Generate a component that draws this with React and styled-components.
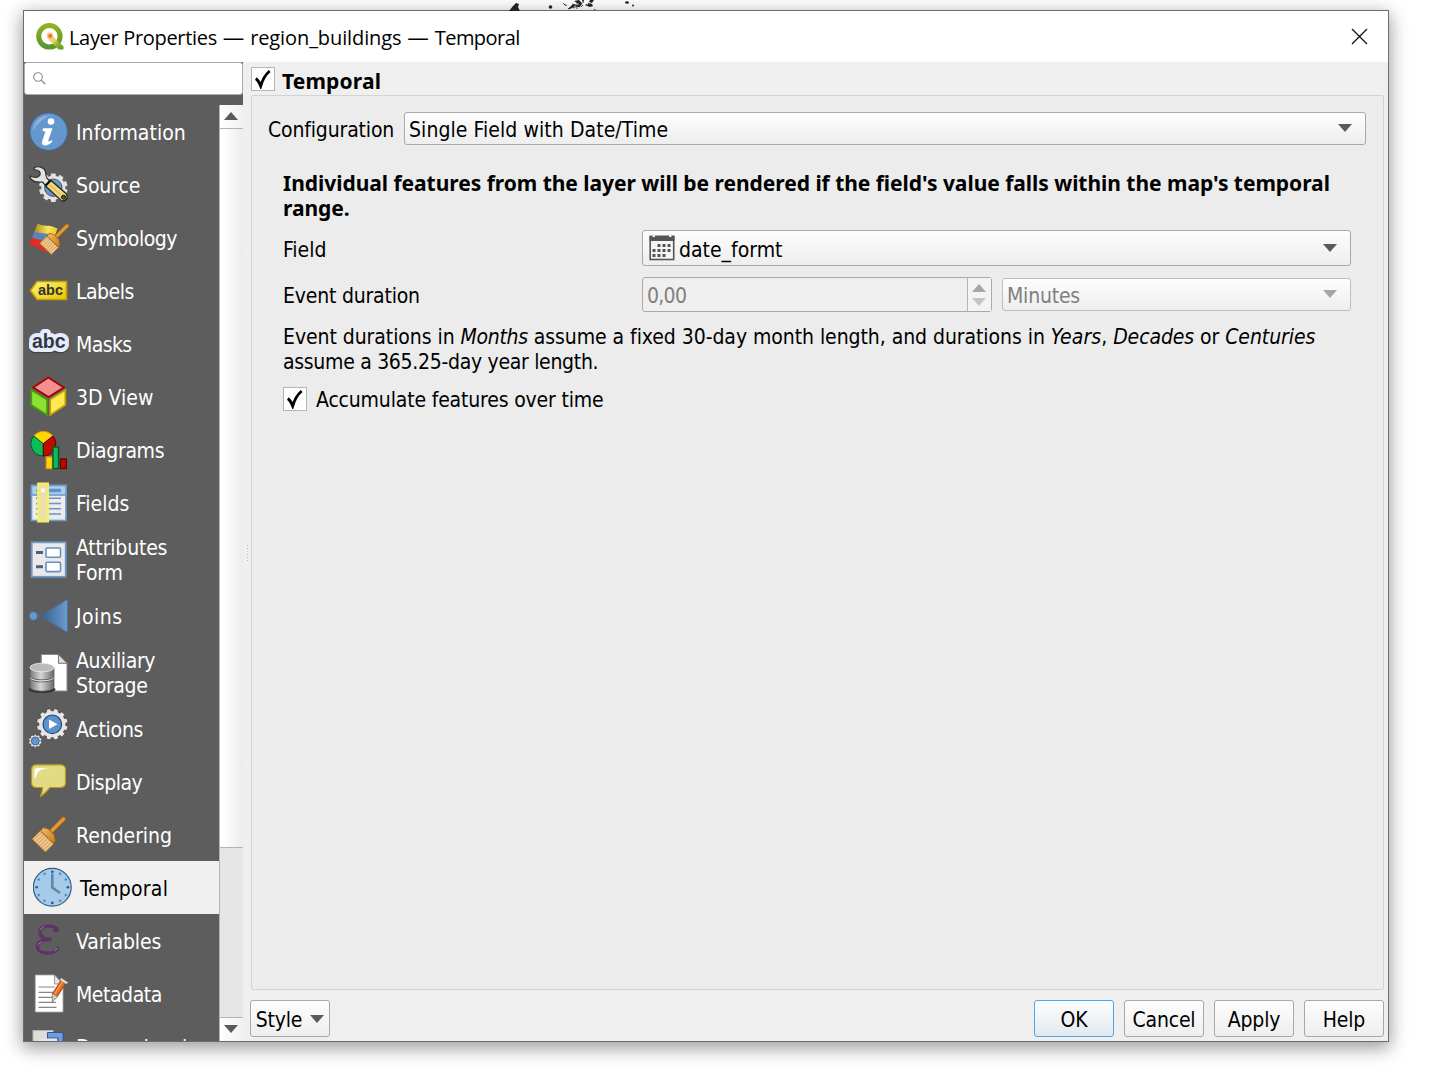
import React from "react";
import styled, { createGlobalStyle } from "styled-components";

const Global = createGlobalStyle`
  * { box-sizing: border-box; }
  body {
    margin: 0;
    background: #fff;
    overflow: hidden;
    color: #000;
    font: 21px/25px "DejaVu Sans Condensed", "DejaVu Sans", sans-serif;
    white-space: nowrap;
  }
  svg { display: block; flex: none; }
  p { margin: 0; }
`;

const Desktop = styled.div`
  position: relative;
  width: 1436px;
  height: 1070px;
  padding: 10px 0 0 23px;
  overflow: hidden;
`;

const MapSpecks = styled.svg`
  position: absolute;
  left: 500px;
  top: 0;
`;

const Window = styled.main`
  display: flex;
  flex-direction: column;
  width: 1366px;
  height: 1032px;
  border: 1px solid #686c6f;
  background: #efefef;
  box-shadow: 0 5px 17px 1px rgba(0, 0, 0, 0.4);
`;

const TitleBar = styled.header`
  display: flex;
  align-items: center;
  height: 51px;
  flex: none;
  padding: 0 20px 0 11px;
  background: #fff;
`;

const WindowTitle = styled.h1`
  flex: 1;
  margin: 2px 0 0 5px;
  font: 400 20px/26px "Open Sans", sans-serif;
`;

const TitlePart = styled.span`
  letter-spacing: ${(p) => p.$track}px;
`;

const Dash = styled.span`
  margin: 0 0.7px;
  font-size: 21.5px;
  line-height: 20px;
`;

const Body = styled.div`
  display: flex;
  flex: 1;
  min-height: 0;
`;

const Sidebar = styled.aside`
  display: flex;
  flex-direction: column;
  width: 219px;
  flex: none;
  background: #5d5d5d;
`;

const SearchBox = styled.div`
  display: flex;
  align-items: center;
  height: 33px;
  margin: 0 0 10px;
  flex: none;
  padding-left: 8px;
  border: 1px solid #ababab;
  border-radius: 3px;
  background: #fff;
`;

const ListArea = styled.div`
  display: flex;
  flex: 1;
  min-height: 0;
`;

const NavList = styled.nav`
  flex: 1;
  overflow: hidden;
`;

const NavRow = styled.div`
  display: flex;
  align-items: center;
  gap: 7px;
  height: ${(p) => (p.$tall ? 60 : 53)}px;
  padding-left: ${(p) => (p.$active ? 9 : 5)}px;
  background: ${(p) => (p.$active ? "#f0f0f0" : "transparent")};
  color: ${(p) => (p.$active ? "#000" : "#fff")};
  white-space: pre-line;
`;

const NavLabel = styled.span`
  padding-top: 3px;
  letter-spacing: ${(p) => p.$track}px;
`;

const ScrollBar = styled.div`
  display: flex;
  flex-direction: column;
  width: 24px;
  border-left: 1px solid #b4b4b4;
  background: #e6e6e6;
`;

const ScrollButton = styled.div`
  display: flex;
  align-items: center;
  justify-content: center;
  height: 23px;
  flex: none;
  padding: 0 2px 2px 0;
  background: linear-gradient(90deg, #fff, #f0f0f0);
`;

const ScrollHandle = styled.div`
  height: 720px;
  margin-bottom: 169px;
  border: solid #b4b4b4;
  border-width: 1px 0;
  background: linear-gradient(90deg, #fff 15%, #ececec);
`;

const ScrollEdge = styled.div`
  height: 1px;
  background: #b4b4b4;
`;

const Splitter = styled.div`
  display: flex;
  flex: none;
  flex-direction: column;
  justify-content: center;
  gap: 2px;
  width: 8px;
  padding: 2px 0 0 4px;
`;

const SplitterDot = styled.i`
  width: 1px;
  height: 1px;
  background: #b8b8b8;
`;

const Content = styled.section`
  display: flex;
  flex-direction: column;
  flex: 1;
  min-width: 0;
  padding: 5px 4px 4px 0;
`;

const CheckLine = styled.div`
  display: flex;
  align-items: center;
  gap: ${(p) => p.$gap}px;
`;

const GroupHeader = styled(CheckLine)`
  align-items: flex-start;
  height: 28px;
`;

const CheckBox = styled.span`
  display: grid;
  place-items: center;
  width: 24px;
  height: 24px;
  border: 1px solid #b5b5b5;
  background: #fff;
`;

const GroupTitle = styled.h2`
  margin: 2px 0 0;
  font: 700 21px/25px "Noto Sans", sans-serif;
  letter-spacing: 0.15px;
`;

const GroupFrame = styled.div`
  flex: 1;
  padding: 16px 17px 0 16px;
  border: 1px solid #d3d3d3;
  border-radius: 2px;
  background: #ececec;
`;

const ConfigRow = styled.div`
  display: flex;
  align-items: center;
  gap: 10px;
  height: 33px;
`;

const Label = styled.label`
  padding-top: ${(p) => p.$drop ?? 3}px;
  width: ${(p) => (p.$width ? `${p.$width}px` : "auto")};
  letter-spacing: ${(p) => p.$track || 0}px;
`;

const Combo = styled.div`
  display: flex;
  align-items: center;
  flex: 1;
  height: ${(p) => p.$height}px;
  padding: 0 13px 1px ${(p) => p.$pad}px;
  border: 1px solid ${(p) => (p.$disabled ? "#c0c0c0" : "#a9a9a9")};
  border-radius: 3px;
  background: linear-gradient(#fdfdfd, #eeeeee);
  color: ${(p) => (p.$disabled ? "#808080" : "#000")};
`;

const ComboText = styled.span`
  flex: 1;
  padding: ${(p) => p.$drop ?? 4}px 0 0 ${(p) => p.$indent || 0}px;
  letter-spacing: ${(p) => p.$track || 0}px;
`;

const Form = styled.div`
  padding: 26px 15px 0 15px;
`;

const Summary = styled.p`
  font: 700 21px/25px "Noto Sans", sans-serif;
  letter-spacing: -0.035px;
  white-space: normal;
`;

const FieldRow = styled.div`
  display: grid;
  grid-template-columns: 349px 1fr;
  align-items: center;
  column-gap: 10px;
  height: ${(p) => p.$height}px;
  margin-top: ${(p) => p.$top}px;
`;

const DurationInputs = styled.div`
  display: grid;
  grid-template-columns: 350px 1fr;
  align-items: center;
  gap: 10px;
`;

const SpinBox = styled.div`
  display: flex;
  height: 35px;
  border: 1px solid #a9a9a9;
  border-radius: 3px;
  background: #efefef;
  color: #808080;
`;

const SpinValue = styled.span`
  flex: 1;
  padding: 6px 0 0 4px;
  letter-spacing: -0.7px;
`;

const SpinButtons = styled.span`
  display: flex;
  flex-direction: column;
  align-items: center;
  justify-content: center;
  gap: 6px;
  width: 24px;
  padding-right: 1px;
  border-left: 1px solid #b4b4b4;
  background: #f3f3f3;
`;

const Note = styled.p`
  margin: 13px 0 10px;
  letter-spacing: -0.06px;
`;

const Term = styled.em`
  letter-spacing: ${(p) => p.$track}px;
`;

const NoteTail = styled.span`
  letter-spacing: -0.3px;
`;

const Footer = styled.footer`
  display: flex;
  gap: 10px;
  margin: 10px 0 0 -1px;
`;

const Button = styled.button`
  display: flex;
  align-items: center;
  justify-content: center;
  gap: 8px;
  width: 80px;
  height: 37px;
  margin: 0 ${(p) => (p.$push ? "auto" : 0)} 0 0;
  padding: 0;
  border: 1px solid ${(p) => (p.$primary ? "#4aa5ec" : "#a9a9a9")};
  border-radius: 3px;
  background: ${(p) =>
    p.$primary ? "linear-gradient(#fdfdfe, #e2e9ef)" : "linear-gradient(#fdfdfd, #eeeeee)"};
  color: #000;
  font: inherit;
  letter-spacing: -0.2px;
`;

const ButtonText = styled.span`
  padding-top: 4px;
`;

const Arrow = ({ up, color = "#5a5a5a" }) => (
  <svg width="14" height="8" viewBox="0 0 14 8">
    <path d={up ? "M0 8L7 0L14 8Z" : "M0 0H14L7 8Z"} fill={color} />
  </svg>
);

const Tick = () => (
  <svg width="18" height="20" viewBox="0 0 18 20">
    <path d="M1.800 9.500C4 11 5.500 13.500 6.700 17C8.500 11 11.500 5.500 15.700 2" fill="none" stroke="#000" strokeWidth="2.800" />
  </svg>
);

const gearPath = (cx, cy, r, depth, teeth) => {
  const pts = [];
  for (let i = 0; i < teeth; i++) {
    const a = ((i + 0.5) / teeth) * Math.PI * 2;
    const s = (Math.PI * 2) / teeth;
    [[-0.34, r - depth], [-0.26, r], [0.26, r], [0.34, r - depth]].forEach(([o, d]) => {
      pts.push(`${(cx + d * Math.cos(a + o * s)).toFixed(2)} ${(cy + d * Math.sin(a + o * s)).toFixed(2)}`);
    });
  }
  return `M${pts.join("L")}Z`;
};

const Icon = ({ children }) => (
  <svg width="40" height="41" viewBox="0 0 40 41">{children}</svg>
);

const InformationIcon = () => (
  <Icon>
    <circle cx="19.700" cy="20.700" r="18.700" fill="#6597cf" stroke="#41699f" strokeWidth="1" />
    <path d="M4 20C5 10 11 4.500 21 4.500C15 7 8 12 4 20Z" fill="#8fb3dd" />
    <circle cx="22" cy="10.500" r="3.300" fill="#fff" />
    <path d="M14 17.200H23.500L19.300 29.500C19 31 20.500 30.500 23.500 29L22.500 31.500C18 35.500 12 35.500 13 30.500L16.500 20.500L13.500 20Z" fill="#fff" />
  </Icon>
);

const SourceIcon = () => (
  <Icon>
    <path d={gearPath(24.3, 23.7, 14.4, 2.4, 10)} fill="#e2e2e2" />
    <circle cx="24.300" cy="23.700" r="8.700" fill="#6597cf" stroke="#49525c" />
    <path d="M5 4C9 1.500 15 3 16.500 7.500C17 10 16.500 12 18 14L21 17.500L16.500 21.500L13.500 18C10 18.500 5 18.500 1.500 14.500L1.200 12C5 14 9.500 14 11 11C12 8 9.500 6 5.500 5.500Z" fill="#e4e4df" stroke="#333" strokeWidth="1.200" />
    <path d="M16.500 22L22 16.500L37 29.500C40 34 36.500 38 32 36.500Z" fill="#ecd77c" stroke="#26231c" strokeWidth="1.300" />
    <path d="M20 20.500L32 31" stroke="#d4bf62" strokeWidth="1.200" />
    <circle cx="34.500" cy="33.200" r="2" fill="#5b5436" stroke="#111" />
    <path d="M16.500 21.500L21.500 16.500" stroke="#111" strokeWidth="2.200" />
  </Icon>
);

const Brush = ({ id }) => (
  <g>
    <defs>
      <linearGradient id={id} x1="0" y1="0" x2="1" y2="1">
        <stop offset="0" stopColor="#f5bd69" />
        <stop offset="1" stopColor="#c27a1c" />
      </linearGradient>
    </defs>
    <path d="M34.500 5L21 18.500" stroke="#9b5c12" strokeWidth="5" strokeLinecap="round" />
    <path d="M34.500 5L20 19.500" stroke="#e0993e" strokeWidth="3.400" strokeLinecap="round" />
    <path d="M11.500 16.500L3 25L16.500 38L25 29.500Z" fill="#efc78c" stroke="#a8712a" />
    <path d="M13 18L4.500 26M15 20L6.500 28M17 22L8.500 30M19 24L10.500 32M21 26L12.500 34M23 28L14.500 36" stroke="#c28e4e" strokeWidth=".8" />
    <path d="M14 13.500C17 14.500 19 14 20.500 16L25 20.500C26 22 25.500 24.500 26.500 26.500L24.500 29.500L11.500 17Z" fill={`url(#${id})`} stroke="#9b5c12" />
  </g>
);

const SymbologyIcon = () => (
  <Icon>
    <defs>
      <linearGradient id="flagShade"><stop offset="0" stopColor="#a58b1c" /><stop offset=".6" stopColor="#f9e75c" /><stop offset="1" stopColor="#e8c81e" /></linearGradient>
    </defs>
    <path d="M8.500 6.500C14 10 20 7 28.500 11.500L24 24L5 16Z" fill="url(#flagShade)" />
    <path d="M5.500 14.500C11 17.500 17 14 24 20L20 30L2 23Z" fill="#5c84b8" />
    <path d="M3 20.500C8 23.500 13 21 20 27L17 36C10 30 6 30.500 0 26.500Z" fill="#e22c23" />
    <g transform="translate(8 4.500) scale(.87)"><Brush id="brushSym" /></g>
  </Icon>
);

const LabelsIcon = () => (
  <Icon>
    <defs>
      <linearGradient id="tagFill" x1="0" y1="0" x2="1" y2="1"><stop offset="0" stopColor="#fff27c" /><stop offset="1" stopColor="#e8c500" /></linearGradient>
    </defs>
    <path d="M1.500 20.500L8 11.500H37.500V29.500H8Z" fill="url(#tagFill)" stroke="#c49f06" strokeWidth="1.600" />
    <text x="9" y="25" fontFamily="Liberation Sans, sans-serif" fontWeight="700" fontSize="14.500" fill="#323232">abc</text>
  </Icon>
);

const MasksIcon = () => (
  <Icon>
    <g fontFamily="Liberation Sans, sans-serif" fontWeight="700" fontSize="19.500" strokeLinejoin="round">
      <text x="3" y="25.700" stroke="#434343" strokeWidth="8.600" fill="none">abc</text>
      <text x="3" y="24.900" stroke="#e6ecfc" strokeWidth="8" fill="none">abc</text>
      <text x="3" y="24.900" fill="#323a40">abc</text>
    </g>
  </Icon>
);

const CubeIcon = () => (
  <Icon>
    <g strokeWidth="1.700">
      <path d="M19.300 1.500L34.800 11.500L19.600 21L4.200 11.500Z" fill="#f58f8f" stroke="#a60000" />
      <path d="M2.300 14L18 23.500V39L2.300 29Z" fill="#8ae234" stroke="#4e9a06" />
      <path d="M36.300 14L21.200 23.500V39L36.300 29Z" fill="#fce94f" stroke="#c4a000" />
    </g>
  </Icon>
);

const DiagramsIcon = () => (
  <Icon>
    <path d="M14.300 14.700L4.700 7A12.300 12.300 0 0 1 23.900 7Z" fill="#ffd800" stroke="#e2920b" />
    <path d="M14.300 14.700L4.700 7A12.300 12.300 0 0 0 14.300 27Z" fill="#0bbd57" stroke="#05572a" />
    <path d="M14.300 14.700L23.900 7A12.300 12.300 0 0 1 14.300 27Z" fill="#bd0b00" stroke="#5e0300" />
    <rect x="17.300" y="28" width="6" height="11.500" fill="#ffd800" stroke="#ef9c10" strokeWidth="1.400" />
    <rect x="31.500" y="30" width="5.800" height="9.500" fill="#bd0b00" stroke="#6a0300" strokeWidth="1.400" />
    <rect x="24" y="18" width="5.500" height="21.500" fill="#0bbd57" stroke="#05572a" strokeWidth="1.400" />
  </Icon>
);

const FieldsIcon = () => (
  <Icon>
    <rect x="2.500" y="3.500" width="34.500" height="35" fill="#ececec" stroke="#6c9aca" strokeWidth="1.600" />
    <rect x="2.500" y="3.500" width="34.500" height="9.500" fill="#abcfee" stroke="#6c9aca" strokeWidth="1.600" />
    <path d="M7 8.500H32M7 16.200H32M7 21.500H32M7 26.800H32M7 32H32" stroke="#6c94c4" strokeWidth="1.600" />
    <path d="M20 8.500H32" stroke="#5f93c8" strokeWidth="3.500" />
    <rect x="9.200" y="1.500" width="9.800" height="38" fill="#ebe0a8" stroke="#f8f258" strokeWidth="2" />
    <rect x="12.300" y="6.700" width="3.500" height="3.500" fill="#fff" />
  </Icon>
);

const FormIcon = () => (
  <Icon>
    <rect x="2.700" y="3.300" width="34" height="34.500" fill="#e9e9e9" stroke="#6c9aca" strokeWidth="1.800" />
    <g fill="#fff" stroke="#6490c2" strokeWidth="1.600">
      <rect x="17" y="9" width="14.500" height="9.300" rx="1" />
      <rect x="17" y="23.300" width="14.500" height="9.300" rx="1" />
    </g>
    <path d="M7 13.400H14M7 27.700H14" stroke="#48637d" strokeWidth="3" />
  </Icon>
);

const JoinsIcon = () => (
  <Icon>
    <defs>
      <linearGradient id="joinFill"><stop offset="0" stopColor="#386088" /><stop offset="1" stopColor="#6a9bd0" /></linearGradient>
    </defs>
    <circle cx="4.300" cy="21" r="4.200" fill="#6597cf" stroke="#426e9f" strokeWidth=".7" />
    <path d="M11.700 21L38.500 4.300V37.500Z" fill="url(#joinFill)" stroke="#426e9f" strokeWidth=".7" />
  </Icon>
);

const StorageIcon = () => (
  <Icon>
    <defs>
      <linearGradient id="discFill"><stop offset="0" stopColor="#777" /><stop offset=".45" stopColor="#d6d6d6" /><stop offset="1" stopColor="#686868" /></linearGradient>
    </defs>
    <path d="M12.300 2.500H29.500L38 11.300V39H12.300Z" fill="#fff" stroke="#8c8c8c" />
    <path d="M29.500 2.500V11.300H38Z" fill="#ddd" stroke="#777" />
    <ellipse cx="13" cy="37.500" rx="13.500" ry="3.500" fill="#333" />
    <path d="M1 15V35C1 40.500 25 40.500 25 35V15Z" fill="url(#discFill)" stroke="#5a5a5a" strokeWidth=".8" />
    <path d="M1 24.500C3 29 23 29 25 24.500M1 26.500C3 31 23 31 25 26.500" fill="none" stroke="#555" strokeWidth=".9" />
    <path d="M1 25.500C3 30 23 30 25 25.500" fill="none" stroke="#eee" strokeWidth=".8" />
    <ellipse cx="13" cy="15.500" rx="12" ry="4.300" fill="#bababa" stroke="#efefef" strokeWidth=".8" />
  </Icon>
);

const ActionsIcon = () => (
  <Icon>
    <path d={gearPath(23.3, 16.3, 15.8, 2.3, 12)} fill="#e6e6e6" stroke="#2d2d2d" strokeWidth=".6" />
    <circle cx="23.300" cy="16.300" r="9.300" fill="#5f92cc" stroke="#2a4a70" strokeWidth="1.200" />
    <path d="M20 11.500L28.500 16.300L20 21.100Z" fill="#fff" />
    <path d={gearPath(6.3, 33, 6.8, 1.2, 10)} fill="#e6e6e6" stroke="#2d2d2d" strokeWidth=".5" />
    <circle cx="6.300" cy="33" r="4" fill="#6597cf" stroke="#2a4a70" strokeWidth=".7" />
  </Icon>
);

const DisplayIcon = () => (
  <Icon>
    <path d="M7.500 3.800H31.500Q36.500 3.800 36.500 8.800V21.500Q36.500 26.500 31.500 26.500H21C18 30 15 33.500 11 35.800C13 32.500 13.500 29.500 13.500 26.500H7.500Q2.500 26.500 2.500 21.500V8.800Q2.500 3.800 7.500 3.800Z" fill="#e4da83" stroke="#b6981c" strokeWidth="1.200" />
    <path d="M5.500 18V10Q5.500 7 9 7H20C13 7.500 8 10 7.500 15Z" fill="#fff" />
  </Icon>
);

const RenderingIcon = () => (
  <Icon><Brush id="brushRender" /></Icon>
);

const ClockIcon = () => (
  <Icon>
    <circle cx="19.300" cy="20.300" r="18.900" fill="#a5cbe9" stroke="#345c82" strokeWidth="1.200" />
    {Array.from({ length: 12 }, (_, i) => {
      const a = (i * Math.PI) / 6;
      return <circle key={i} cx={19.3 + 15.6 * Math.sin(a)} cy={20.3 - 15.6 * Math.cos(a)} r="1.300" fill={i % 3 ? "#4b8fd0" : "#27578a"} />;
    })}
    <path d="M19.300 6.500V20.500L27 26" fill="none" stroke="#5f88a8" strokeWidth="2.600" />
  </Icon>
);

const VariablesIcon = () => (
  <Icon>
    <g fill="none" strokeLinecap="round">
      <path d="M28 9.500C26 5 11 4 11 12C11 16.500 15 19.300 22.500 19.300C14 19.300 8.500 21.500 8.500 26.500C8.500 35 26.500 35 29 28" stroke="#5c3566" strokeWidth="3.400" />
      <circle cx="27" cy="9.800" r="2" fill="#5c3566" stroke="#5c3566" strokeWidth="1.500" />
      <path d="M11 10L14.500 6.700M9 24.500L12 22M26 30.700L28.500 28" stroke="#a688ad" strokeWidth="1" />
    </g>
  </Icon>
);

const MetadataIcon = () => (
  <Icon>
    <path d="M6.300 2H25.500L34 11V39H6.300Z" fill="#fff" stroke="#aaa" strokeWidth=".8" />
    <path d="M25.500 2V11H34Z" fill="#e6e6e6" stroke="#777" strokeWidth=".7" />
    <path d="M9.500 14H26M9.500 19.300H25M9.500 24.300H23M9.500 29.300H27M9.500 34.300H27.500" stroke="#858585" strokeWidth="1.200" />
    <path d="M34.500 8.500L26 22" stroke="#a4460f" strokeWidth="6.400" />
    <path d="M34.500 8.500L26 22" stroke="#e5702a" strokeWidth="4.600" />
    <path d="M33.700 8L25.400 21.500" stroke="#f6a05c" strokeWidth="1.200" />
    <path d="M32 5L39 9.500L37.500 11L31 7Z" fill="#eee" stroke="#999" strokeWidth=".6" />
    <path d="M23.300 20.200L28.700 23.700L23.300 28.700Z" fill="#d7cbb5" stroke="#666" strokeWidth=".7" />
  </Icon>
);

const DependenciesIcon = () => (
  <Icon>
    <rect x="4" y="4.500" width="20" height="26" fill="#ddddda" stroke="#b5b5b0" />
    <path d="M18.500 6.500H34V24H18.500Z" fill="#719edb" stroke="#2c5a9c" />
    <path d="M18.500 12H29V26" fill="none" stroke="#2c5a9c" />
    <rect x="11" y="12.500" width="17" height="16" fill="#e6e6e6" />
  </Icon>
);

const NAV = [
  ["Information", InformationIcon, 0.05],
  ["Source", SourceIcon, -0.1],
  ["Symbology", SymbologyIcon, -0.45],
  ["Labels", LabelsIcon, -0.5],
  ["Masks", MasksIcon, -0.6],
  ["3D View", CubeIcon, 0],
  ["Diagrams", DiagramsIcon, -0.35],
  ["Fields", FieldsIcon, 0],
  ["Attributes\nForm", FormIcon, -0.2],
  ["Joins", JoinsIcon, 0.5],
  ["Auxiliary\nStorage", StorageIcon, -0.35],
  ["Actions", ActionsIcon, -0.25],
  ["Display", DisplayIcon, -0.5],
  ["Rendering", RenderingIcon, -0.05],
  ["Temporal", ClockIcon, 0.25],
  ["Variables", VariablesIcon, -0.1],
  ["Metadata", MetadataIcon, -0.45],
  ["Dependencies", DependenciesIcon, -0.2],
];

const AppLogo = () => (
  <svg width="29" height="28" viewBox="0 0 29 28">
    <defs>
      <linearGradient id="logoRing" x1="0" y1="0" x2="0" y2="1"><stop offset="0" stopColor="#93b023" /><stop offset="1" stopColor="#589632" /></linearGradient>
      <linearGradient id="logoTail" x1="0" y1="0" x2="1" y2="1"><stop offset="0" stopColor="#f0b060" /><stop offset=".35" stopColor="#e8dd6a" /><stop offset=".6" stopColor="#93b023" /><stop offset="1" stopColor="#589632" /></linearGradient>
    </defs>
    <circle cx="14.400" cy="13.300" r="10.700" fill="none" stroke="url(#logoRing)" strokeWidth="5" />
    <path d="M17 12.500L28.500 23.500V26.500H23.500L14 17Z" fill="url(#logoTail)" />
    <circle cx="15" cy="13" r="3.400" fill="#f8c79c" />
    <circle cx="15.200" cy="13" r="2" fill="#ee7913" />
  </svg>
);

const CloseIcon = () => (
  <svg width="17" height="17" viewBox="0 0 17 17">
    <path d="M1 1L16 16M16 1L1 16" stroke="#111" strokeWidth="1.300" />
  </svg>
);

const SearchIcon = () => (
  <svg width="13" height="13" viewBox="0 0 13 13" fill="none" stroke="#8c8c8c">
    <circle cx="5" cy="5" r="4.300" strokeWidth="1.100" />
    <path d="M8 8L12.300 12.300" strokeWidth="1.300" />
  </svg>
);

const CalendarIcon = () => (
  <svg width="26" height="27" viewBox="0 0 26 27">
    <rect x="1.200" y="3" width="23.500" height="22.500" fill="#f4f4f4" stroke="#555" strokeWidth="1.600" />
    <path d="M.5 1.500H25.500V7H.5Z" fill="#555" />
    <path d="M3.500 0H6V3H3.500ZM20 0H22.500V3H20Z" fill="#eee" />
    {[10, 15, 20].map((y, r) =>
      [3, 8, 13, 18].map((x, c) =>
        (r === 0 && c === 0) || (r === 2 && c === 3) ? null : (
          <rect key={`${r}${c}`} x={x + 0.5} y={y} width="3" height="3" fill="#555" />
        )
      )
    )}
  </svg>
);

const Specks = () => (
  <MapSpecks width="140" height="11" viewBox="0 0 140 11" fill="#222">
    <path d="M9 11L13 6L16 3L19 4L18 7L20 11Z" />
    <circle cx="50.500" cy="7" r="1.800" />
    <path d="M64 4L67 5L66 6ZM68 9L72 5L76 4L74 7L70 9ZM74 1L79 0L82 3L80 7L76 6L79 4ZM82 0L84 0L83 4ZM85 5L87 4L87 6ZM88 3L92 4L93 6L90 7L87 6ZM90 0H94L92 3L89 2ZM94 9L96 10H94Z" />
    <path d="M63 3L66 6M68 9L73 6M73 8L82 4M77 9V1M72 4L80 7M81 7L83 5" stroke="#222" strokeWidth=".8" />
    <ellipse cx="127" cy="2.500" rx="2" ry="1.300" />
    <circle cx="133" cy="5.500" r="1" />
  </MapSpecks>
);

export default function App() {
  return (
    <Desktop>
      <Global />
      <Window>
        <TitleBar>
          <AppLogo />
          <WindowTitle>
            <TitlePart $track={-0.32}>Layer Properties</TitlePart> <Dash>—</Dash>{" "}
            <TitlePart $track={-0.1}>region_buildings</TitlePart> <Dash>—</Dash>{" "}
            <TitlePart $track={-0.55}>Temporal</TitlePart>
          </WindowTitle>
          <CloseIcon />
        </TitleBar>
        <Body>
          <Sidebar>
            <SearchBox><SearchIcon /></SearchBox>
            <ListArea>
              <NavList>
                {NAV.map(([label, Glyph, track]) => (
                  <NavRow key={label} $tall={label.includes("\n")} $active={label === "Temporal"}>
                    <Glyph />
                    <NavLabel $track={track}>{label}</NavLabel>
                  </NavRow>
                ))}
              </NavList>
              <ScrollBar>
                <ScrollButton><Arrow up /></ScrollButton>
                <ScrollHandle />
                <ScrollEdge />
                <ScrollButton><Arrow /></ScrollButton>
              </ScrollBar>
            </ListArea>
          </Sidebar>
          <Splitter>
            {Array.from({ length: 6 }, (_, i) => <SplitterDot key={i} />)}
          </Splitter>
          <Content>
            <GroupHeader $gap={7}>
              <CheckBox><Tick /></CheckBox>
              <GroupTitle>Temporal</GroupTitle>
            </GroupHeader>
            <GroupFrame>
              <ConfigRow>
                <Label $width={126} $track={-0.15}>Configuration</Label>
                <Combo $height={33} $pad={4}>
                  <ComboText $track={0.07}>Single Field with Date/Time</ComboText>
                  <Arrow />
                </Combo>
              </ConfigRow>
              <Form>
                <Summary>
                  Individual features from the layer will be rendered if the field's value falls within the map's temporal range.
                </Summary>
                <FieldRow $height={36} $top={9}>
                  <Label $drop={5}>Field</Label>
                  <Combo $height={36} $pad={6}>
                    <CalendarIcon />
                    <ComboText $indent={4} $drop={5}>date_formt</ComboText>
                    <Arrow />
                  </Combo>
                </FieldRow>
                <FieldRow $height={35} $top={11}>
                  <Label $track={-0.2}>Event duration</Label>
                  <DurationInputs>
                    <SpinBox>
                      <SpinValue>0,00</SpinValue>
                      <SpinButtons><Arrow up color="#a6a6a6" /><Arrow color="#c4c4c4" /></SpinButtons>
                    </SpinBox>
                    <Combo $height={33} $pad={4} $disabled>
                      <ComboText $track={-0.2}>Minutes</ComboText>
                      <Arrow color="#a6a6a6" />
                    </Combo>
                  </DurationInputs>
                </FieldRow>
                <Note>
                  Event durations in <Term $track={-0.3}>Months</Term> assume a fixed 30-day month length, and durations in <Term $track={0.1}>Years</Term>, <Term $track={-0.1}>Decades</Term> or <Term $track={-0.05}>Centuries</Term>
                  <br /><NoteTail>assume a 365.25-day year length.</NoteTail>
                </Note>
                <CheckLine $gap={9}>
                  <CheckBox><Tick /></CheckBox>
                  <Label $track={-0.17}>Accumulate features over time</Label>
                </CheckLine>
              </Form>
            </GroupFrame>
            <Footer>
              <Button $push><ButtonText>Style</ButtonText><Arrow /></Button>
              <Button $primary><ButtonText>OK</ButtonText></Button>
              <Button><ButtonText>Cancel</ButtonText></Button>
              <Button><ButtonText>Apply</ButtonText></Button>
              <Button><ButtonText>Help</ButtonText></Button>
            </Footer>
          </Content>
        </Body>
      </Window>
      <Specks />
    </Desktop>
  );
}
